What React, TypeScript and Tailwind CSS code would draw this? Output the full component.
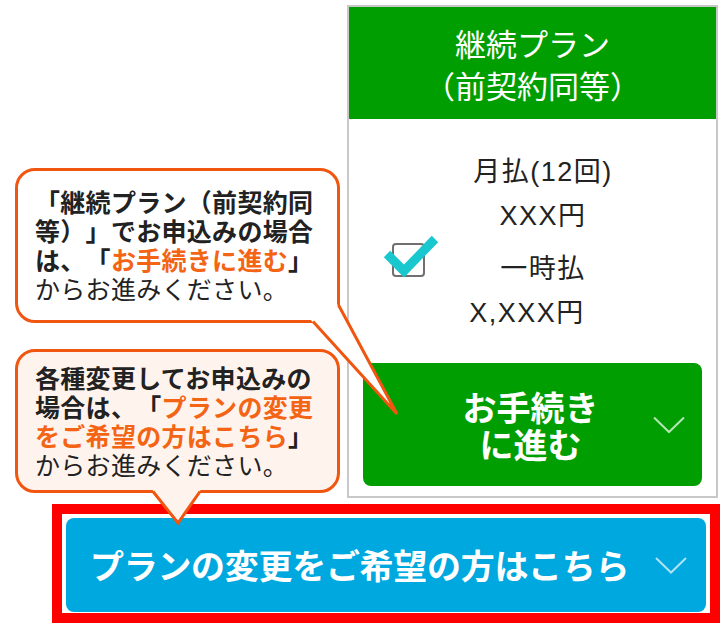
import React from 'react';

const jp = { fontFamily: '"Noto Sans CJK JP", sans-serif' };
const mixed = { fontFamily: '"Liberation Sans", "Noto Sans CJK JP", sans-serif' };

function Chevron({ color }: { color: string }) {
  return (
    <svg width="32" height="17" viewBox="0 0 32 17" fill="none">
      <path d="M1 1 L16 15.5 L31 1" stroke={color} strokeWidth="2" />
    </svg>
  );
}

function PlanCard() {
  return (
    <div className="ml-[7px] w-[371px] h-[493px] border-2 border-[#c8c8c8] bg-white flex flex-col">
      <div className="h-[112px] bg-[#009e00] text-white text-[31px] leading-[42px] flex flex-col items-center justify-center pt-[2px]">
        <span>継続プラン</span>
        <span>（前契約同等）</span>
      </div>

      <div className="flex pt-[31px] pl-[43px]" style={mixed}>
        <div className="relative mt-[93px] w-[33px] h-[34px] border-2 border-[#707070] rounded-[4px] bg-white">
          <svg className="absolute left-[-12px] top-[-12px]" width="60" height="50" viewBox="0 0 60 50" fill="none">
            <path d="M5 21 L22 38 L53 6" stroke="#19c8cf" strokeWidth="9" />
          </svg>
        </div>
        <div className="ml-[12px] w-[212px] flex flex-col items-center text-[27px] leading-[44px] tracking-[1.5px] text-[#222]">
          <span>月払(12回)</span>
          <span>XXX円</span>
          <span className="mt-[9px]">一時払</span>
          <span className="mr-[32px]">X,XXX円</span>
        </div>
      </div>

      <button className="relative mt-auto mb-[10px] mx-[14px] h-[123px] rounded-[8px] bg-[#009e00] flex items-center justify-center">
        <span className="text-white font-bold text-[34px] leading-[37px] text-center pr-[4px]">
          お手続き<br />に進む
        </span>
        <span className="absolute right-[17px] top-1/2 -translate-y-1/2">
          <Chevron color="#b3e6b3" />
        </span>
      </button>
    </div>
  );
}

export default function App() {
  const orange = 'text-[#f36414]';
  return (
    <div className="relative w-[720px] h-[634px] overflow-hidden bg-white text-[#222] [text-spacing-trim:space-all]" style={jp}>
      <div className="flex pt-[5px] pl-[15px]">
        <div className="w-[325px] flex flex-col pt-[163px] gap-[26px]">
          <div className="h-[155px] border-[3px] border-[#f0560f] rounded-[20px] bg-white px-[17px] pt-[16px] text-[25px] leading-[29px] tracking-[0.3px] whitespace-nowrap">
            <div className="font-bold">「継続プラン（前契約同</div>
            <div className="font-bold">等）」でお申込みの場合</div>
            <div className="font-bold">
              は、「<span className={orange}>お手続きに進む</span>」
            </div>
            <div>からお進みください。</div>
          </div>
          <div className="h-[144px] border-[3px] border-[#f0560f] rounded-[20px] bg-[#fff4ed] px-[17px] pt-[11px] text-[25px] leading-[29px] tracking-[0.3px] whitespace-nowrap">
            <div className="font-bold">各種変更してお申込みの</div>
            <div className="font-bold">
              場合は、「<span className={orange}>プランの変更</span>
            </div>
            <div className="font-bold">
              <span className={orange}>をご希望の方はこちら</span>」
            </div>
            <div>からお進みください。</div>
          </div>
        </div>
        <PlanCard />
      </div>

      <div className="ml-[52px] mt-[6px] w-[668px] h-[119px] border-[10px] border-[#ff0000] pt-[4px] px-[4px] pb-[1px]">
        <button className="w-full h-full rounded-[8px] bg-[#00a8e0] flex items-center justify-between pl-[24px] pr-[19px]">
          <span className="text-white font-bold text-[34px] leading-[40px] whitespace-nowrap tracking-[-0.3px]">
            プランの変更をご希望の方はこちら
          </span>
          <Chevron color="#b0e2f5" />
        </button>
      </div>

      <svg className="absolute inset-0 pointer-events-none" width="720" height="634" viewBox="0 0 720 634" fill="none">
        <polygon points="310,319 397,414 336,302" fill="#ffffff" />
        <path d="M313 321.5 L397 414 L338.5 305" stroke="#f0560f" strokeWidth="3" strokeLinejoin="miter" />
        <polygon points="151,488 178,523 202,488" fill="#fff4ed" />
        <path d="M153 491.5 L178 523 L200 491.5" stroke="#f0560f" strokeWidth="3" />
      </svg>
    </div>
  );
}
